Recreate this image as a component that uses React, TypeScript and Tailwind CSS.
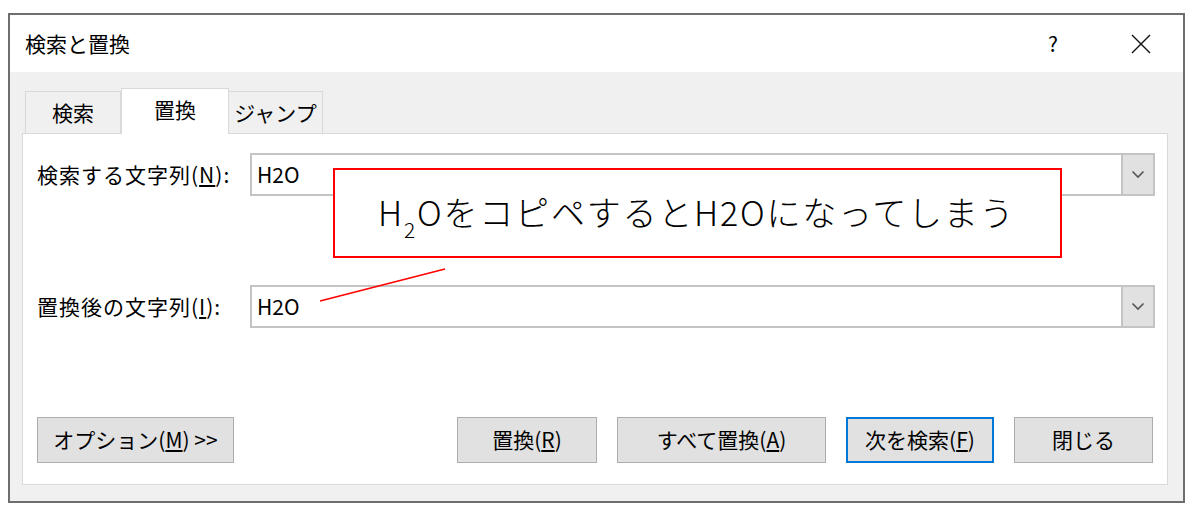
import React from 'react';

const uiFont = { fontFamily: '"Noto Sans CJK JP", "Noto Sans", sans-serif' };

const ComboRow: React.FC<{ label: React.ReactNode; value: string }> = ({ label, value }) => (
  <div className="flex items-center">
    <div className="w-[213px] text-[21px] tracking-[1px] text-black leading-none">{label}</div>
    <div className="flex-1 h-[43px] flex border-2 border-[#c4c4c4] bg-white">
      <div className="flex-1 flex items-center pl-[5px] text-[21px] text-black">{value}</div>
      <div className="w-[32px] flex items-center justify-center bg-[#e1e1e1] border-l-2 border-[#c4c4c4]">
        <svg width="14" height="9" viewBox="0 0 14 9">
          <path d="M1.5 1.5 L7 7 L12.5 1.5" fill="none" stroke="#555" strokeWidth="1.6" />
        </svg>
      </div>
    </div>
  </div>
);

const Btn: React.FC<{ w: string; primary?: boolean; children: React.ReactNode }> = ({ w, primary, children }) => (
  <div
    className={
      'h-[46px] flex items-center justify-center bg-[#e1e1e1] text-[21px] text-black ' +
      w +
      (primary ? ' border-2 border-[#0078d7]' : ' border border-[#adadad]')
    }
  >
    {children}
  </div>
);

export default function App() {
  return (
    <div className="relative w-[1203px] h-[525px] bg-white overflow-hidden" style={uiFont}>
      <div className="pl-[8px] pt-[13px]">
        <div className="w-[1177px] h-[490px] border-2 border-[#6e6e6e] flex flex-col bg-[#f0f0f0]">
          {/* title bar */}
          <div className="h-[57px] bg-white flex items-center pl-[15px] pr-[32px]">
            <span className="text-[21px] text-black">検索と置換</span>
            <span className="ml-auto text-[21px] text-black mr-[73px]">?</span>
            <svg width="20" height="20" viewBox="0 0 20 20">
              <path d="M1 1 L19 19 M19 1 L1 19" stroke="#111" strokeWidth="1.4" />
            </svg>
          </div>

          {/* tabs */}
          <div className="flex items-end h-[61px] pl-[15px]">
            <div className="w-[96px] h-[42px] flex items-center justify-center border border-b-0 border-[#d9d9d9] text-[21px] text-black">
              検索
            </div>
            <div className="w-[108px] h-[46px] flex items-center justify-center border border-b-0 border-[#d9d9d9] bg-white text-[21px] text-black -mb-px relative z-10 pb-[4px]">
              置換
            </div>
            <div className="w-[94px] h-[42px] flex items-center justify-center border border-b-0 border-l-0 border-[#d9d9d9] text-[21px] text-black">
              ジャンプ
            </div>
          </div>

          {/* panel */}
          <div className="ml-[12px] w-[1146px] h-[352px] border border-[#d9d9d9] bg-white flex flex-col pl-[14px] pr-[12px] pt-[19px]">
            <ComboRow
              label={
                <>
                  検索する文字列(<u>N</u>):
                </>
              }
              value="H2O"
            />
            <div className="h-[89px]" />
            <ComboRow
              label={
                <>
                  置換後の文字列(<u>I</u>):
                </>
              }
              value="H2O"
            />
            <div className="h-[89px]" />
            <div className="flex items-center pr-[2px]">
              <Btn w="w-[197px]">
                オプション(<u>M</u>)&nbsp;&gt;&gt;
              </Btn>
              <div className="ml-auto flex gap-[20px]">
                <Btn w="w-[140px]">
                  置換(<u>R</u>)
                </Btn>
                <Btn w="w-[209px]">
                  すべて置換(<u>A</u>)
                </Btn>
                <Btn w="w-[148px]" primary>
                  次を検索(<u>F</u>)
                </Btn>
                <Btn w="w-[139px]">閉じる</Btn>
              </div>
            </div>
          </div>
        </div>
      </div>

      {/* callout */}
      <div className="absolute left-[333px] top-[168px] w-[729px] h-[90px] border-2 border-[#ff0000] bg-white flex items-center pl-[43px] pb-[4px]">
        <span className="text-[34px] font-light text-black tracking-[1.8px] whitespace-nowrap">
          H<sub className="text-[21px] align-[-7px]">2</sub>OをコピペするとH2Oになってしまう
        </span>
      </div>
      <svg className="absolute left-0 top-0" width="1203" height="525" viewBox="0 0 1203 525">
        <line x1="445" y1="269" x2="320" y2="301" stroke="#ff0000" strokeWidth="1.6" />
      </svg>
    </div>
  );
}
